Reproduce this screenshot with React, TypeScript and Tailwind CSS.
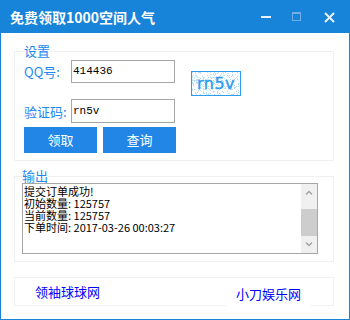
import * as React from 'react';

const cjk = '"Noto Sans CJK SC", "Liberation Sans", sans-serif';
const mono = '"Liberation Mono", "Noto Sans CJK SC", monospace';

function Captcha({ code }: { code: string }) {
  // speckled noise background, drawn
  const dots = React.useMemo(() => {
    const out: { x: number; y: number }[] = [];
    let seed = 7;
    for (let i = 0; i < 260; i++) {
      seed = (seed * 9301 + 49297) % 233280;
      const x = (seed / 233280) * 48;
      seed = (seed * 9301 + 49297) % 233280;
      const y = (seed / 233280) * 23;
      out.push({ x: Math.floor(x), y: Math.floor(y) });
    }
    return out;
  }, []);

  return (
    <div className="relative mt-[11px] ml-[16px] h-[25px] w-[50px] border border-[#2b9cf0] bg-white">
      <svg width="48" height="23" className="absolute left-0 top-0">
        {dots.map((d, i) => (
          <rect key={i} x={d.x} y={d.y} width="1" height="1" fill="#b8e0f6" />
        ))}
      </svg>
      <div
        className="relative flex h-full items-center justify-center text-[16px] leading-none tracking-[0.5px] text-[#2b9cf0]"
        style={{ fontFamily: '"DejaVu Sans", sans-serif', WebkitTextStroke: '0.4px #2b9cf0' }}
      >
        {code}
      </div>
    </div>
  );
}

export default function App() {
  const lines = ['提交订单成功!', '初始数量: 125757', '当前数量: 125757', '下单时间: 2017-03-26 00:03:27'];

  return (
    <div
      className="flex h-[320px] w-[350px] flex-col border border-[#1783d9] bg-white"
      style={{ fontFamily: cjk }}
    >
      {/* title bar */}
      <div className="flex h-[32px] shrink-0 items-center bg-[#1783d9] pl-[9px]">
        <span className="text-[14px] font-bold text-white">免费领取1000空间人气</span>
        <div className="ml-auto flex h-full items-center">
          <div className="flex h-full w-[31px] items-center justify-center">
            <div className="mt-[-1px] h-[2px] w-[10px] bg-[#e6f1fb]" />
          </div>
          <div className="flex h-full w-[31px] items-center justify-center">
            <div className="mt-[-2px] h-[9px] w-[9px] border border-t-2 border-[#6fb0ea]" />
          </div>
          <div className="flex h-full w-[37px] items-center justify-center pr-[3px]">
            <svg width="11" height="11" viewBox="0 0 11 11">
              <path d="M1 1 L10 10 M10 1 L1 10" stroke="#e6f1fb" strokeWidth="2" />
            </svg>
          </div>
        </div>
      </div>

      {/* body */}
      <div className="flex flex-col pl-[13px] pr-[15px]">
        <fieldset className="mt-[11px] border border-[#f0f0f0] pb-[7px] pl-[9px] pt-[2px]">
          <legend className="text-[13px] leading-[14px] !text-[#1e88f0]">设置</legend>
          <div className="flex items-start">
            <span className="w-[47px] pt-[3px] text-[13px] leading-[17px] text-[#1e88f0]">QQ号:</span>
            <div
              className="flex h-[23px] w-[104px] items-center border border-[#a6a6a6] pl-[1px] text-[11px] text-black"
              style={{ fontFamily: mono }}
            >
              414436
            </div>
            <Captcha code="rn5v" />
          </div>
          <div className="mt-[3px] flex items-center">
            <span className="w-[47px] text-[13px] leading-[17px] text-[#1e88f0]">验证码:</span>
            <div
              className="flex h-[24px] w-[104px] items-center border border-[#a6a6a6] pl-[1px] text-[11px] text-black"
              style={{ fontFamily: mono }}
            >
              rn5v
            </div>
          </div>
          <div className="mt-[4px] flex gap-[6px]">
            <button className="h-[26px] w-[73px] bg-[#2186e6] text-[13px] text-white">领取</button>
            <button className="h-[26px] w-[73px] bg-[#2186e6] text-[13px] text-white">查询</button>
          </div>
        </fieldset>

        <fieldset className="mt-[8px] border border-[#f0f0f0] pb-[7px] pl-[7px] pr-[15px]">
          <legend className="text-[13px] leading-[14px] !text-[#1e88f0]">输出</legend>
          <div className="flex h-[71px] border border-[#a6a6a6]">
            <div className="flex-1 pl-[1px] pt-[1px] text-[11px] leading-[12px] text-black">
              {lines.map((l, i) => (
                <div key={i}>{l}</div>
              ))}
            </div>
            <div className="flex w-[16px] flex-col bg-[#f0f0f0]">
              <div className="flex h-[17px] items-center justify-center">
                <svg width="8" height="5" viewBox="0 0 8 5">
                  <path d="M1 4.5 L4 1.5 L7 4.5" stroke="#a0a0a0" strokeWidth="1.3" fill="none" />
                </svg>
              </div>
              <div className="mt-[8px] h-[27px] bg-[#cdcdcd]" />
              <div className="mt-auto flex h-[17px] items-center justify-center">
                <svg width="8" height="5" viewBox="0 0 8 5">
                  <path d="M1 0.5 L4 3.5 L7 0.5" stroke="#a0a0a0" strokeWidth="1.3" fill="none" />
                </svg>
              </div>
            </div>
          </div>
        </fieldset>

        <div className="mt-[15px] flex h-[29px] items-start border border-[#f0f0f0] pl-[20px]">
          <a className="mt-[6px] text-[13px] leading-[16px] text-[#0000ff]">领袖球球网</a>
          <a className="ml-auto mr-[22px] mt-[8px] bg-white px-[10px] pb-[6px] text-[13px] leading-[16px] text-[#0000ff]">
            小刀娱乐网
          </a>
        </div>
      </div>
    </div>
  );
}
